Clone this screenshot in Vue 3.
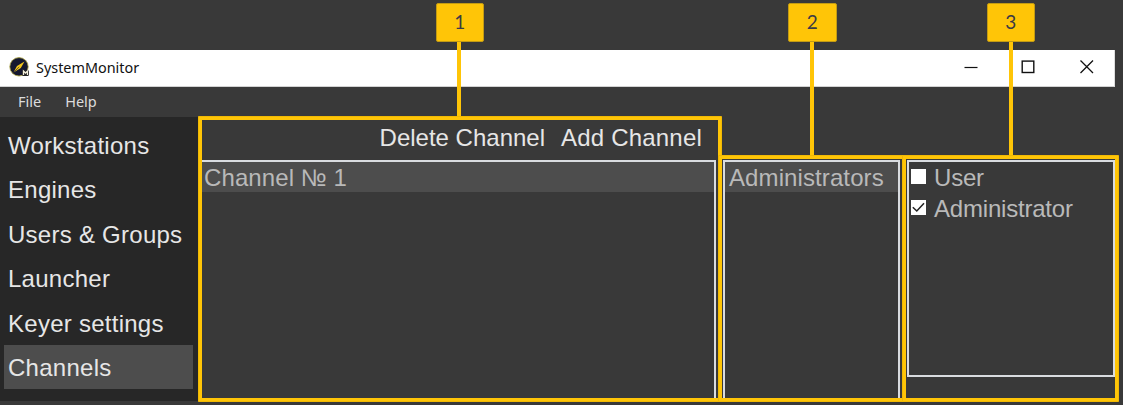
<script setup>
const sections = ['Workstations', 'Engines', 'Users & Groups', 'Launcher', 'Keyer settings', 'Channels']
const selected = 'Channels'
const roles = [
  { name: 'User', checked: false },
  { name: 'Administrator', checked: true },
]
const callouts = [1, 2, 3]
</script>

<template>
  <div class="screen">
    <div class="window">
      <header class="titlebar">
        <svg class="logo" viewBox="0 0 22 22">
          <circle cx="10" cy="9.8" r="9.2" fill="#15182f" stroke="#a9a03a" stroke-width=".8" />
          <path d="M4.5 15.5 8 9 15.5 4.5 11.8 11Z" fill="#f1c51b" />
          <path d="M4.5 15.5 10.2 9.8" stroke="#17182a" stroke-width=".6" />
          <rect x="13" y="13" width="7" height="6" rx="1.5" fill="#222" />
          <path d="M14.5 18v-4l2 2 2-2v4" fill="none" stroke="#f4f0dc" stroke-width="1.3" />
        </svg>
        <span class="title">SystemMonitor</span>
        <svg class="controls" viewBox="0 0 150 36" fill="none" stroke="#111">
          <path d="M.5 17.5h13" stroke-width="1.2" />
          <rect x="58.2" y="11.1" width="11.6" height="11.4" stroke-width="1.4" />
          <path d="M116.5 10.5 129 23M129 10.5 116.5 23" stroke-width="1.3" />
        </svg>
      </header>
      <nav class="menu"><span>File</span><span>Help</span></nav>
      <div class="body">
        <aside class="sidebar">
          <div v-for="s in sections" :key="s" class="item" :class="{ active: s === selected }">{{ s }}</div>
        </aside>
        <section class="channels">
          <div class="toolbar"><span class="delete">Delete Channel</span><span class="add">Add Channel</span></div>
          <div class="list"><div class="row">Channel № 1</div></div>
        </section>
        <section class="groups"><div class="row">Administrators</div></section>
        <section class="roles">
          <div v-for="r in roles" :key="r.name" class="role">
            <svg class="check" viewBox="0 0 15 15">
              <rect width="15" height="15" fill="#fff" />
              <path v-if="r.checked" d="M1.8 7.2 5.8 11 13 3.2" fill="none" stroke="#222" stroke-width="1.5" />
            </svg>
            <span class="role-name">{{ r.name }}</span>
          </div>
        </section>
      </div>
    </div>
    <div v-for="n in callouts" :key="n" :class="['callout', 'c' + n]">
      <div class="badge">{{ n }}</div>
      <div class="stem"></div>
    </div>
    <div v-for="n in callouts" :key="'f' + n" :class="['frame', 'f' + n]"></div>
  </div>
</template>

<style>
body { background: #393939; }
</style>

<style scoped>
* { box-sizing: border-box; }
.screen {
  position: relative;
  width: 1123px;
  height: 405px;
  padding-top: 50px;
  overflow: hidden;
  background: #393939;
  font: 24px/30px "Liberation Sans", Arial, sans-serif;
  letter-spacing: .26px;
  white-space: nowrap;
}
.window { width: 1115px; }
.titlebar {
  display: flex;
  height: 37px;
  background: #fff;
  border-bottom: 1px solid #d2d2d2;
  border-right: 1px solid #ddd;
}
.logo { width: 22px; height: 22px; margin: 7px 0 0 9px; }
.title {
  margin-left: 5px;
  font: 14.4px/36px "Noto Sans", sans-serif;
  letter-spacing: 0;
  color: #111;
}
.controls { width: 150px; height: 36px; margin-left: auto; }
.menu {
  display: flex;
  gap: 24px;
  height: 30px;
  padding-left: 18px;
  font: 14.5px/29px "Noto Sans", sans-serif;
  letter-spacing: 0;
  color: #dcdcdc;
}
.body {
  display: grid;
  grid-template-columns: 198px 518px 7px 177px 7px 208px;
  height: 284px;
}
.sidebar { padding: 6px 5px 0 4px; background: #272727; color: #e6e6e6; }
.item { height: 44.4px; padding-left: 4px; line-height: 46px; }
.item.active { background: #4d4d4d; }
.toolbar {
  display: flex;
  justify-content: flex-end;
  gap: 16px;
  height: 43px;
  padding: 6px 14px 0 0;
  color: #e6e6e6;
}
.delete { letter-spacing: 0; }
.add { letter-spacing: .2px; }
.list { height: 241px; border: solid #d9dce0; border-width: 2px 2px 0 0; }
.list, .groups, .roles { color: #b9b9b9; }
.row { height: 30px; padding-left: 6px; line-height: 31px; background: #4d4d4d; letter-spacing: .1px; }
.groups { grid-column: 4; margin-top: 43px; border: solid #d9dce0; border-width: 2px 2px 0; }
.groups .row { padding-left: 4px; }
.roles { grid-column: 6; height: 217px; margin-top: 43px; padding-left: 2px; border: 2px solid #d9dce0; letter-spacing: -.2px; }
.role { display: flex; align-items: flex-start; height: 31px; gap: 8px; }
.role-name { margin-top: 1px; }
.check { width: 15px; height: 15px; margin-top: 7px; }
.callout { position: absolute; top: 3px; width: 48px; }
.c1 { left: 436px; }
.c2 { left: 788px; width: 49px; }
.c3 { left: 987px; }
.badge {
  height: 39px;
  border: 1px solid #c39b14;
  border-radius: 2px;
  background: #ffc507;
  color: #3b3a45;
  font: 19px/35px Lato, sans-serif;
  text-align: center;
}
.stem { width: 4px; height: 75px; margin: 0 auto; background: #ffc507; }
.c1 .stem { margin-left: 21.4px; }
.c2 .stem { margin-left: 22px; }
.c2 .stem, .c3 .stem { height: 114px; }
.frame {
  position: absolute;
  border: 4px solid #ffc507;
  border-radius: 1px;
  outline: 1px solid rgba(210, 160, 0, .3);
  outline-offset: -1px;
}
.f1 { left: 198px; top: 116px; width: 524px; height: 286px; }
.f2 { left: 718px; top: 155px; width: 188px; height: 247px; }
.f3 { left: 902px; top: 155px; width: 217px; height: 247px; }
</style>
